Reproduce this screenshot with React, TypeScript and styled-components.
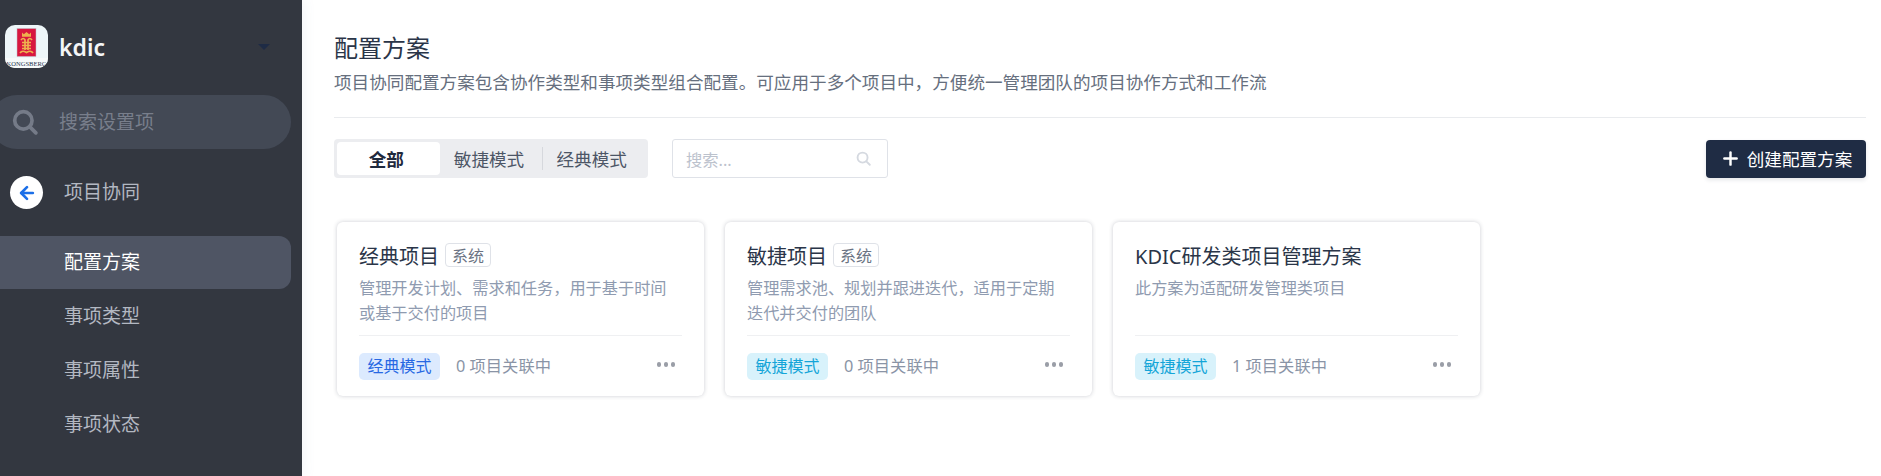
import { FC } from "react";
import styled, { createGlobalStyle } from "styled-components";
import { ArrowLeft, Plus } from "lucide-react";

const FONT = `"Noto Sans", "Noto Sans CJK SC", "Liberation Sans", sans-serif`;

const GlobalStyle = createGlobalStyle`
  html, body {
    margin: 0;
    padding: 0;
    height: 100%;
    overflow: hidden;
    background: #fff;
    font-family: ${FONT};
  }
  * { box-sizing: border-box; }
`;

const Wrapper = styled.div`
  width: 1881px;
  height: 476px;
  display: flex;
  overflow: hidden;
`;

const Sidebar = styled.aside`
  width: 302px;
  height: 476px;
  flex: none;
  background: #333740;
  box-shadow: 2px 0 12px rgba(90, 110, 160, 0.08);
  padding: 25px 11px 0 0;
  overflow: hidden;
`;

const Brand = styled.div`
  display: flex;
  align-items: center;
  height: 43px;
  padding-left: 5px;
`;

const LogoBox = styled.div`
  width: 43px;
  height: 43px;
  border-radius: 10px;
  overflow: hidden;
  background: #eef6f9;
  flex: none;
`;

const BrandName = styled.span`
  margin-left: 11px;
  font-size: 23px;
  font-weight: 600;
  color: #f4f5f7;
`;

const Caret = styled.i`
  margin-left: auto;
  margin-right: 21px;
  width: 0;
  height: 0;
  border-left: 6px solid transparent;
  border-right: 6px solid transparent;
  border-top: 6px solid #1e2b45;
`;

const SearchPill = styled.div`
  margin: 27px 0 0 -10px;
  height: 54px;
  border-radius: 27px;
  background: #434955;
  display: flex;
  align-items: center;
  padding-left: 22px;
`;

const SearchLabel = styled.span`
  margin: 0 0 2px 21px;
  font-size: 19px;
  color: #787e8b;
`;

const BackRow = styled.div`
  display: flex;
  align-items: center;
  margin-top: 27px;
  height: 33px;
  padding-left: 10px;
`;

const BackCircle = styled.span`
  width: 33px;
  height: 33px;
  border-radius: 50%;
  background: #fff;
  color: #1b6fe8;
  display: flex;
  align-items: center;
  justify-content: center;
`;

const BackLabel = styled.span`
  margin: 0 0 4px 21px;
  font-size: 19px;
  color: #b3b8c2;
`;

const NavList = styled.nav`
  margin-top: 27px;
  display: flex;
  flex-direction: column;
  gap: 1px;
`;

const NavItem = styled.div<{ $active?: boolean }>`
  height: 53px;
  padding: 0 0 3px 64px;
  display: flex;
  align-items: center;
  font-size: 19px;
  border-radius: 0 12px 12px 0;
  color: ${(p) => (p.$active ? "#ffffff" : "#b3b8c2")};
  background: ${(p) => (p.$active ? "#4f5564" : "transparent")};
`;

const Main = styled.main`
  flex: 1;
  min-width: 0;
  padding: 32px 15px 0 32px;
`;

const Title = styled.h1`
  margin: 0;
  font-size: 24px;
  line-height: 32px;
  font-weight: 400;
  color: #2a3548;
`;

const Description = styled.p`
  margin: 2px 0 0;
  font-size: 17.6px;
  line-height: 32px;
  color: #666f7e;
  white-space: nowrap;
`;

const Divider = styled.div`
  margin-top: 19px;
  height: 1px;
  background: #e9ebee;
`;

const Toolbar = styled.div`
  margin-top: 21px;
  display: flex;
  align-items: center;
`;

const Tabs = styled.div`
  width: 314px;
  height: 39px;
  padding: 3px;
  border-radius: 4px;
  background: #ecedf0;
  display: flex;
  align-items: center;
`;

const Tab = styled.div<{ $active?: boolean; $sep?: boolean }>`
  width: 103px;
  height: 33px;
  padding-right: 4px;
  display: flex;
  align-items: center;
  justify-content: center;
  font-size: 17.6px;
  border-radius: 4px;
  color: ${(p) => (p.$active ? "#1f2a3d" : "#4d5666")};
  font-weight: ${(p) => (p.$active ? 700 : 400)};
  background: ${(p) => (p.$active ? "#fff" : "transparent")};
  position: relative;

  &::before {
    content: "";
    display: ${(p) => (p.$sep ? "block" : "none")};
    position: absolute;
    left: 0;
    top: 5px;
    bottom: 5px;
    width: 1px;
    background: #d6d8dd;
  }
`;

const SearchBox = styled.div`
  margin-left: 24px;
  width: 216px;
  height: 39px;
  border: 1px solid #dfe2e8;
  border-radius: 3px;
  display: flex;
  align-items: center;
  justify-content: space-between;
  padding: 0 16px 0 13px;
  font-size: 16.3px;
  color: #bcc2cd;
`;

const CreateButton = styled.button`
  margin-left: auto;
  width: 160px;
  height: 38px;
  border: none;
  border-radius: 4px;
  background: #1f2c44;
  color: #fff;
  font-family: inherit;
  font-size: 17.6px;
  display: flex;
  align-items: center;
  justify-content: center;
  gap: 6px;
  padding: 0;
  box-shadow: 0 2px 4px rgba(31, 44, 68, 0.12);
`;

const CardGrid = styled.div`
  margin-top: 44px;
  padding-left: 3px;
  display: flex;
  gap: 21px;
`;

const Card = styled.article`
  width: 367px;
  height: 174px;
  padding: 0 22px;
  background: #fff;
  border-radius: 6px;
  box-shadow: 0 0 4px rgba(40, 50, 70, 0.24);
  display: flex;
  flex-direction: column;
`;

const CardHead = styled.div`
  margin: 19px 0 0 0;
  height: 28px;
  display: flex;
  align-items: center;
`;

const CardTitle = styled.span`
  font-size: 20px;
  color: #2a3548;
`;

const SystemBadge = styled.span`
  margin-left: 6px;
  width: 46px;
  height: 24px;
  border: 1px solid #dfe2e8;
  border-radius: 4px;
  display: flex;
  align-items: center;
  justify-content: center;
  font-size: 16px;
  color: #6a7383;
`;

const CardDesc = styled.p`
  margin: 7px 0 0;
  height: 59px;
  font-size: 16.2px;
  line-height: 25px;
  color: #8f9bb0;
`;

const CardFoot = styled.div`
  border-top: 1px solid #eff0f2;
  height: 61px;
  display: flex;
  align-items: center;
  padding-right: 7px;
`;

const ModeTag = styled.span<{ $mode: "classic" | "agile" }>`
  width: 81px;
  height: 27px;
  padding-bottom: 2px;
  border-radius: 5px;
  display: flex;
  align-items: center;
  justify-content: center;
  font-size: 16px;
  color: ${(p) => (p.$mode === "classic" ? "#2768e3" : "#14a5d8")};
  background: ${(p) => (p.$mode === "classic" ? "#dceafe" : "#d8f2fb")};
`;

const LinkCount = styled.span`
  margin: 0 0 2px 16px;
  font-size: 16.3px;
  color: #8a94a6;
`;

const Dots = styled.span`
  margin: 0 0 3px auto;
  display: flex;
  gap: 2.5px;

  i {
    width: 4.5px;
    height: 4.5px;
    border-radius: 50%;
    background: #9a9ea7;
  }
`;

const Logo: FC = () => (
  <svg width="43" height="43" viewBox="0 0 43 43">
    <rect x="12" y="3.5" width="19" height="28" fill="#d8173f" stroke="#b9c4d0" strokeWidth="0.5" />
    <path d="M17 7.5l1.8 1.7 2.7-2.2 2.7 2.2L26 7.5v4.2h-9z" fill="#eeb04e" />
    <path
      d="M16 15c1.5-2 3-2 4 0v10M27 15c-1.5-2-3-2-4 0v10M17 17.5h9M17 20.5h9M17 23.5h9M15 28c2-3 4-2 6.5-.5 2.5-1.5 4.500-2.500 6.500.5"
      stroke="#eeb04e"
      strokeWidth="1.7"
      fill="none"
    />
    <rect x="0" y="33" width="43" height="10" fill="#f7fafb" />
    <text
      x="1.5"
      y="40.5"
      textLength="40"
      lengthAdjust="spacingAndGlyphs"
      fontSize="6.6"
      fontFamily='"Liberation Serif", serif'
      fill="#26364f"
    >
      KONGSBERG
    </text>
  </svg>
);

const SearchIcon: FC<{ size: number; color: string; stroke: number }> = ({ size, color, stroke }) => (
  <svg width={size} height={size} viewBox="0 0 24 24" fill="none" stroke={color} strokeWidth={stroke} strokeLinecap="round">
    <circle cx="10.5" cy="10.5" r="8" />
    <path d="M16.5 16.5L22 22" />
  </svg>
);

const plans = [
  {
    title: "经典项目",
    system: true,
    desc: "管理开发计划、需求和任务，用于基于时间或基于交付的项目",
    mode: "classic" as const,
    count: 0,
  },
  {
    title: "敏捷项目",
    system: true,
    desc: "管理需求池、规划并跟进迭代，适用于定期迭代并交付的团队",
    mode: "agile" as const,
    count: 0,
  },
  {
    title: "KDIC研发类项目管理方案",
    system: false,
    desc: "此方案为适配研发管理类项目",
    mode: "agile" as const,
    count: 1,
  },
];

const App: FC = () => {
  return (
    <Wrapper>
      <GlobalStyle />
      <Sidebar>
        <Brand>
          <LogoBox>
            <Logo />
          </LogoBox>
          <BrandName>kdic</BrandName>
          <Caret />
        </Brand>
        <SearchPill>
          <SearchIcon size={26} color="#757b88" stroke={3.4} />
          <SearchLabel>搜索设置项</SearchLabel>
        </SearchPill>
        <BackRow>
          <BackCircle>
            <ArrowLeft size={20} strokeWidth={3.2} />
          </BackCircle>
          <BackLabel>项目协同</BackLabel>
        </BackRow>
        <NavList>
          <NavItem $active>配置方案</NavItem>
          <NavItem>事项类型</NavItem>
          <NavItem>事项属性</NavItem>
          <NavItem>事项状态</NavItem>
        </NavList>
      </Sidebar>
      <Main>
        <Title>配置方案</Title>
        <Description>
          项目协同配置方案包含协作类型和事项类型组合配置。可应用于多个项目中，方便统一管理团队的项目协作方式和工作流
        </Description>
        <Divider />
        <Toolbar>
          <Tabs>
            <Tab $active>全部</Tab>
            <Tab>敏捷模式</Tab>
            <Tab $sep>经典模式</Tab>
          </Tabs>
          <SearchBox>
            <span>搜索...</span>
            <SearchIcon size={15} color="#d5d9e0" stroke={3} />
          </SearchBox>
          <CreateButton>
            <Plus size={21} strokeWidth={2.8} />
            创建配置方案
          </CreateButton>
        </Toolbar>
        <CardGrid>
          {plans.map((plan) => (
            <Card key={plan.title}>
              <CardHead>
                <CardTitle>{plan.title}</CardTitle>
                {plan.system && <SystemBadge>系统</SystemBadge>}
              </CardHead>
              <CardDesc>{plan.desc}</CardDesc>
              <CardFoot>
                <ModeTag $mode={plan.mode}>{plan.mode === "classic" ? "经典模式" : "敏捷模式"}</ModeTag>
                <LinkCount>{plan.count} 项目关联中</LinkCount>
                <Dots>
                  <i />
                  <i />
                  <i />
                </Dots>
              </CardFoot>
            </Card>
          ))}
        </CardGrid>
      </Main>
    </Wrapper>
  );
};

export default App;
